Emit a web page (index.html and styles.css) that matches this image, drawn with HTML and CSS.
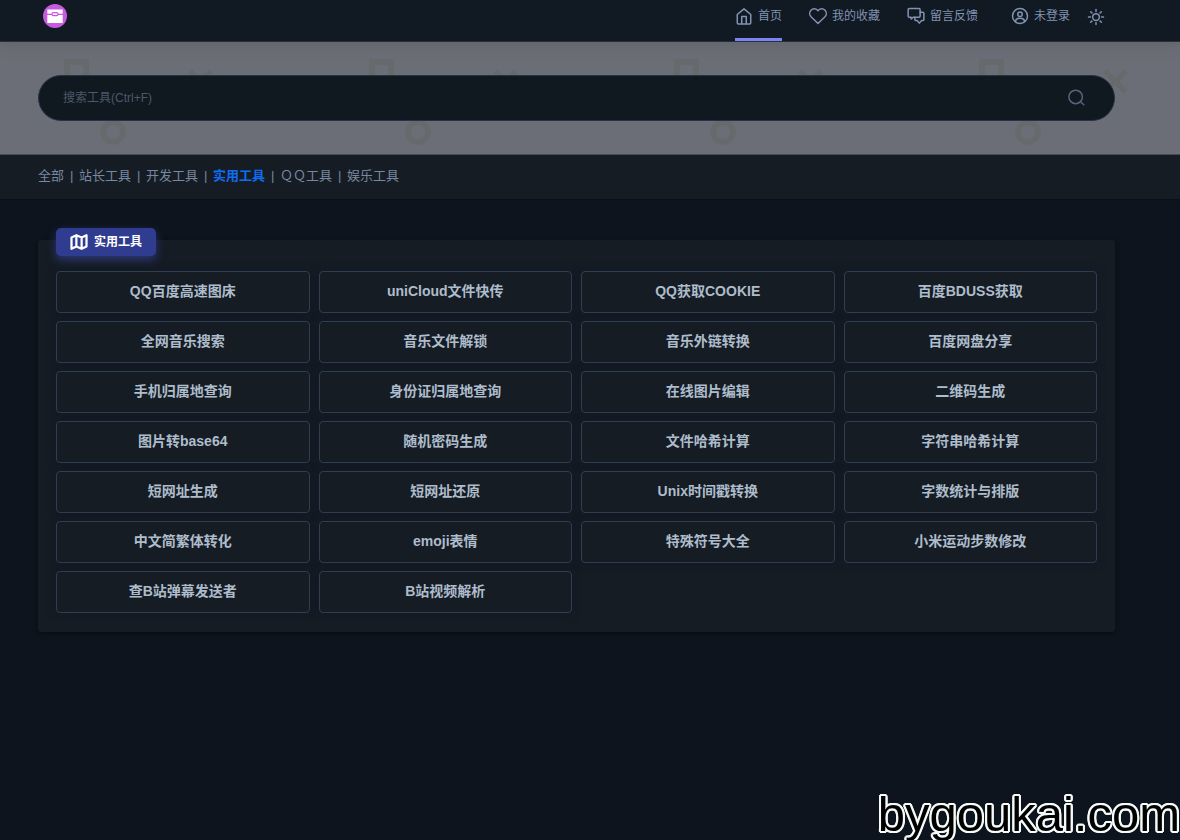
FILE: index.html
```
<!DOCTYPE html>
<html lang="zh-CN">

<head>
    <meta charset="utf-8">
    <meta name="viewport" content="width=device-width, initial-scale=1.0">
    <title>实用工具</title>
    <link rel="stylesheet" href="styles.css">
</head>

<body>
    <header class="navbar">
        <a class="logo" href="#" aria-label="工具箱">
            <svg viewBox="0 0 24 24" width="24" height="24">
                <circle cx="12" cy="12" r="12" fill="#c65be0" />
                <path d="M4.300 5.500h15.400v4.300H4.300zM4.300 11h15.400v8H4.300z" fill="#fff" />
                <rect x="9" y="8.700" width="6" height="3" rx="1.200" fill="#fff" stroke="#c65be0" stroke-width="1.200" />
            </svg>
        </a>
        <nav class="menu">
            <a class="menu-item active" href="#">
                <svg class="icon" viewBox="0 0 24 24">
                    <path d="M3 10l9-7.500 9 7.500v11a1.500 1.500 0 0 1-1.500 1.500h-15A1.500 1.500 0 0 1 3 21z" />
                    <path d="M9 22v-9.500h6V22" />
                </svg>
                <span>首页</span>
            </a>
            <a class="menu-item" href="#">
                <svg class="icon" viewBox="0 0 24 24">
                    <path d="M12 22L2.700 13a6.300 6.300 0 0 1 0-8.700 6 6 0 0 1 8.700 0l.6.700.6-.7a6 6 0 0 1 8.700 0 6.300 6.300 0 0 1 0 8.700z" />
                </svg>
                <span>我的收藏</span>
            </a>
            <a class="menu-item" href="#">
                <svg class="icon" viewBox="0 0 24 24">
                    <path d="M3 2h13a1.500 1.500 0 0 1 1.500 1.500V12a1.500 1.500 0 0 1-1.500 1.500H8.500L5.500 16v-2.500H3A1.500 1.500 0 0 1 1.500 12V3.500A1.500 1.500 0 0 1 3 2z" />
                    <path d="M17.500 7H21a1.500 1.500 0 0 1 1.500 1.500v8A1.500 1.500 0 0 1 21 18h-1.500l-3 3.500-3-3.500H12a1.500 1.500 0 0 1-1.500-1.500v-3" />
                </svg>
                <span>留言反馈</span>
            </a>
            <a class="menu-item user" href="#">
                <svg class="icon" viewBox="0 0 24 24">
                    <circle cx="12" cy="12" r="10" />
                    <circle cx="12" cy="9.500" r="3" />
                    <path d="M6 19.500c0-3 2-4.500 6-4.500s6 1.500 6 4.500" />
                </svg>
                <span>未登录</span>
            </a>
            <button class="theme" type="button" aria-label="切换主题">
                <svg class="icon" viewBox="0 0 24 24">
                    <circle cx="12" cy="12" r="4.500" />
                    <path d="M12 2v2.500M12 19.500V22M2 12h2.500M19.500 12H22M4.900 4.900l1.600 1.600M17.500 17.500l1.600 1.600M4.900 19.100l1.600-1.600M17.500 6.500l1.600-1.600" />
                </svg>
            </button>
        </nav>
    </header>

    <section class="banner">
        <form class="search">
            <input class="search-input" type="text" placeholder="搜索工具(Ctrl+F)" aria-label="搜索工具">
            <button class="search-btn" type="button" aria-label="搜索">
                <svg class="icon" viewBox="0 0 24 24">
                    <circle cx="11.500" cy="10.500" r="9" />
                    <path d="M18 17l4.500 4" />
                </svg>
            </button>
        </form>
    </section>

    <nav class="tabs">
        <a href="#">全部</a><i>|</i>
        <a href="#">站长工具</a><i>|</i>
        <a href="#">开发工具</a><i>|</i>
        <a class="active" href="#">实用工具</a><i>|</i>
        <a href="#">ＱＱ工具</a><i>|</i>
        <a href="#">娱乐工具</a>
    </nav>

    <main>
        <section class="panel">
            <h2 class="panel-title">
                <svg class="icon" viewBox="0 0 24 24">
                    <path d="M2 6l6.500-3 7 3L22 3v15l-6.500 3-7-3L2 21zM8.500 3v15M15.500 6v15" />
                </svg>
                <span>实用工具</span>
            </h2>
            <div class="tools">
                <a href="#">QQ百度高速图床</a>
                <a href="#">uniCloud文件快传</a>
                <a href="#">QQ获取COOKIE</a>
                <a href="#">百度BDUSS获取</a>
                <a href="#">全网音乐搜索</a>
                <a href="#">音乐文件解锁</a>
                <a href="#">音乐外链转换</a>
                <a href="#">百度网盘分享</a>
                <a href="#">手机归属地查询</a>
                <a href="#">身份证归属地查询</a>
                <a href="#">在线图片编辑</a>
                <a href="#">二维码生成</a>
                <a href="#">图片转base64</a>
                <a href="#">随机密码生成</a>
                <a href="#">文件哈希计算</a>
                <a href="#">字符串哈希计算</a>
                <a href="#">短网址生成</a>
                <a href="#">短网址还原</a>
                <a href="#">Unix时间戳转换</a>
                <a href="#">字数统计与排版</a>
                <a href="#">中文简繁体转化</a>
                <a href="#">emoji表情</a>
                <a href="#">特殊符号大全</a>
                <a href="#">小米运动步数修改</a>
                <a href="#">查B站弹幕发送者</a>
                <a href="#">B站视频解析</a>
            </div>
        </section>
    </main>

    <div class="watermark">bygoukai.com</div>
</body>

</html>
```

FILE: styles.css
```
/* vars */
:root {
    --bg: #0d141d;
    --nav: #111922;
    --panel: #151c24;
    --input: #101820;
    --line: #2f3e50;
    --muted: #8193b2;
    --outline: #f4fbf8;
}

* {
    box-sizing: border-box;
}

body {
    margin: 0;
    min-height: 100vh;
    background: var(--bg);
    color: var(--muted);
    font-family: "Liberation Sans", "Noto Sans CJK SC", sans-serif;
    overflow-x: hidden;
}

a {
    color: inherit;
    text-decoration: none;
}

button {
    padding: 0;
    border: 0;
    background: none;
    color: inherit;
}

.icon {
    display: block;
    flex: none;
    width: 18px;
    height: 18px;
    fill: none;
    stroke: currentColor;
    stroke-width: 2;
    stroke-linejoin: round;
    stroke-linecap: round;
}

/* header */
.navbar {
    display: flex;
    justify-content: space-between;
    position: relative;
    height: 42px;
    padding: 0 75px 0 43px;
    background: var(--nav);
    border-bottom: 1px solid #29313b;
    box-shadow: 0 2px 12px rgba(80, 88, 80, 0.4);
}

.logo {
    padding-top: 4px;
}

.menu {
    display: flex;
    gap: 27px;
    font-size: 12px;
}

.menu-item {
    display: flex;
    align-items: center;
    gap: 5px;
    padding-bottom: 6px;
    border-bottom: 3px solid transparent;
    line-height: 18px;
    white-space: nowrap;
}

.menu-item.active {
    border-bottom-color: #7c83f5;
}

.user {
    margin-left: 6px;
}

.theme {
    margin-left: -10px;
    padding-bottom: 8px;
}

/* search */
.banner {
    padding: 33px 65px 33px 38px;
    background-color: #6b6e76;
    background-image: url("data:image/svg+xml,%3Csvg xmlns='http://www.w3.org/2000/svg' width='305' height='112'%3E%3Cg fill='none' stroke='%23676a6d' stroke-width='6'%3E%3Crect x='67' y='20' width='19' height='19'/%3E%3Ccircle cx='113' cy='90' r='10'/%3E%3Cpath d='M190 29l21 21M211 29l-21 21'/%3E%3C/g%3E%3C/svg%3E");
    background-repeat: repeat-x;
    border-bottom: 1px solid #464c54;
}

.search {
    display: flex;
    align-items: center;
    height: 46px;
    padding: 0 29px 0 24px;
    background: var(--input);
    border: 1px solid #27334a;
    border-radius: 23px;
}

.search-input {
    flex: 1;
    min-width: 0;
    padding: 0;
    border: 0;
    outline: 0;
    background: none;
    color: var(--muted);
    font-family: inherit;
    font-size: 12px;
}

.search-input::placeholder {
    color: #4c586a;
}

.search-btn {
    color: #56647a;
}

/* tabs */
.tabs {
    display: flex;
    gap: 6px;
    padding: 11px 38px 13px;
    background: var(--panel);
    border-bottom: 1px solid #0b1017;
    font-size: 13px;
    line-height: 20px;
    color: #7888a0;
}

.tabs i {
    width: 3px;
    font-style: normal;
}

.tabs .active {
    color: #0f6df2;
    font-weight: bold;
}

/* tool list */
main {
    padding: 40px 65px 40px 38px;
}

.panel {
    padding: 0 18px 19px;
    background: var(--panel);
    border-radius: 3px;
    box-shadow: 0 1px 4px rgba(0, 0, 0, 0.4);
}

.panel-title {
    display: inline-flex;
    align-items: center;
    gap: 6px;
    height: 28px;
    margin: -12px 0 15px;
    padding: 0 14px;
    background: #303c8f;
    border-radius: 5px;
    box-shadow: 0 4px 10px rgba(62, 72, 170, 0.6);
    color: #fff;
    font-size: 12px;
    line-height: 18px;
    vertical-align: top;
}

.panel-title .icon {
    stroke-width: 3;
}

.tools {
    display: grid;
    grid-template-columns: repeat(4, 1fr);
    gap: 8px 9px;
}

.tools a {
    padding: 9px 4px 11px;
    border: 1px solid var(--line);
    border-radius: 4px;
    box-shadow: 0 0 8px rgba(16, 24, 38, 0.6);
    color: #aebccb;
    font-size: 14px;
    font-weight: bold;
    line-height: 20px;
    text-align: center;
}

.watermark {
    position: fixed;
    right: 0;
    bottom: -4px;
    color: #000;
    font-size: 49px;
    line-height: 60px;
    text-shadow: 2px 0 var(--outline), -2px 0 var(--outline), 0 2px var(--outline), 0 -2px var(--outline),
        1px 2px var(--outline), -1px 2px var(--outline), 1px -2px var(--outline), -1px -2px var(--outline),
        2px 1px var(--outline), -2px 1px var(--outline), 2px -1px var(--outline), -2px -1px var(--outline);
    pointer-events: none;
}

@media only screen and (max-width: 700px) {
    .navbar {
        padding: 0 16px;
    }

    .menu {
        gap: 16px;
    }

    .menu-item span {
        display: none;
    }

    .user,
    .theme {
        margin-left: 0;
    }

    .banner,
    main {
        padding-left: 16px;
        padding-right: 16px;
    }

    .tabs {
        flex-wrap: wrap;
        padding: 12px 16px;
    }

    .tools {
        grid-template-columns: repeat(2, 1fr);
    }
}
```
